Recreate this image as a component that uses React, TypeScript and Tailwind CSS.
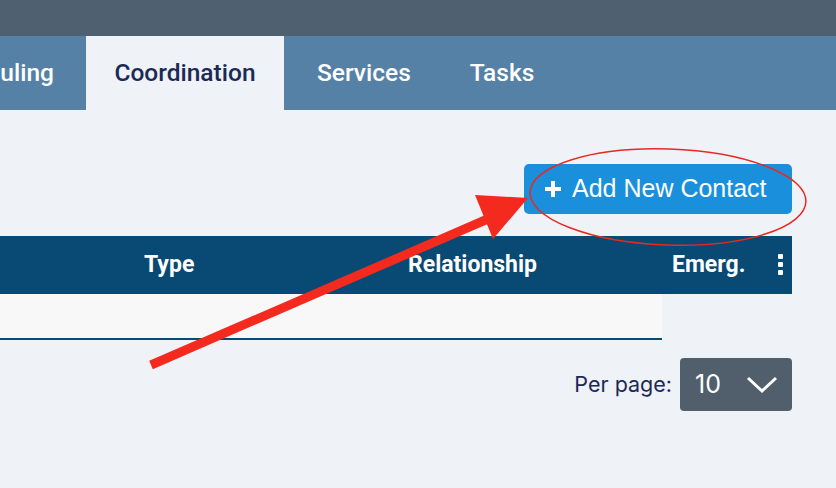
import React from "react";

export default function App() {
  return (
    <div className="relative w-[836px] h-[488px] overflow-hidden bg-[#eff2f6]" style={{ fontFamily: "Roboto, sans-serif" }}>
      <div className="h-[36px] bg-[#4f6071]" />
      <div className="h-[74px] bg-[#5581a7] flex items-stretch text-[24.5px] font-medium text-white">
        <div className="w-[86px] flex items-center justify-end pr-[32px]">uling</div>
        <div className="w-[198px] bg-[#eff2f6] text-[#1b2a55] flex items-center justify-center">Coordination</div>
        <div className="flex items-center pl-[33px]">Services</div>
        <div className="flex items-center pl-[59px]">Tasks</div>
      </div>
      <div className="flex justify-end pr-[44px] pt-[54px]">
        <button className="h-[50px] w-[268px] rounded-[5px] bg-[#1a8fdb] text-white flex items-center pl-[19px] gap-[9px] text-[25px]" style={{ fontFamily: "'Liberation Sans', Arial, sans-serif" }}>
          <svg width="20" height="20" viewBox="0 0 20 20"><path d="M10 2v16M2 10h16" stroke="white" strokeWidth="4" /></svg>
          <span>Add New Contact</span>
        </button>
      </div>
      <div className="mt-[22px] w-[792px] h-[58px] bg-[#084a74] text-white font-bold text-[23px] flex items-center relative">
        <span className="absolute left-[144px]">Type</span>
        <span className="absolute left-[408px]">Relationship</span>
        <span className="absolute left-[672px]">Emerg.</span>
        <span className="absolute left-[778px] top-[18px] flex flex-col gap-[3px]">
          <span className="w-[5px] h-[5px] bg-white rounded-[1px]" />
          <span className="w-[5px] h-[5px] bg-white rounded-[1px]" />
          <span className="w-[5px] h-[5px] bg-white rounded-[1px]" />
        </span>
      </div>
      <div className="w-[662px] h-[46px] bg-[#f8f8f8] border-b-2 border-[#084a74]" />
      <div className="flex justify-end items-center pr-[44px] mt-[18px] gap-[8px]" style={{ fontFamily: "Inter, sans-serif" }}>
        <span className="text-[21.5px] text-[#1b2a55]">Per page:</span>
        <div className="w-[112px] h-[53px] rounded-[4px] bg-[#515f6d] flex items-center justify-between pl-[15px] pr-[14px] text-white text-[25px]">
          <span>10</span>
          <svg width="32" height="18" viewBox="0 0 32 18"><path d="M2 2l14 13L30 2" fill="none" stroke="white" strokeWidth="3" /></svg>
        </div>
      </div>
      <svg className="absolute left-0 top-0 pointer-events-none" width="836" height="488">
        <ellipse cx="668" cy="197" rx="138" ry="48" fill="none" stroke="#e8291f" strokeWidth="1.5" transform="rotate(2 668 197)" />
        <line x1="151" y1="365" x2="490" y2="218" stroke="#f52a1f" strokeWidth="9" />
        <polygon points="528,198 475,195 493,239" fill="#f52a1f" />
      </svg>
    </div>
  );
}
